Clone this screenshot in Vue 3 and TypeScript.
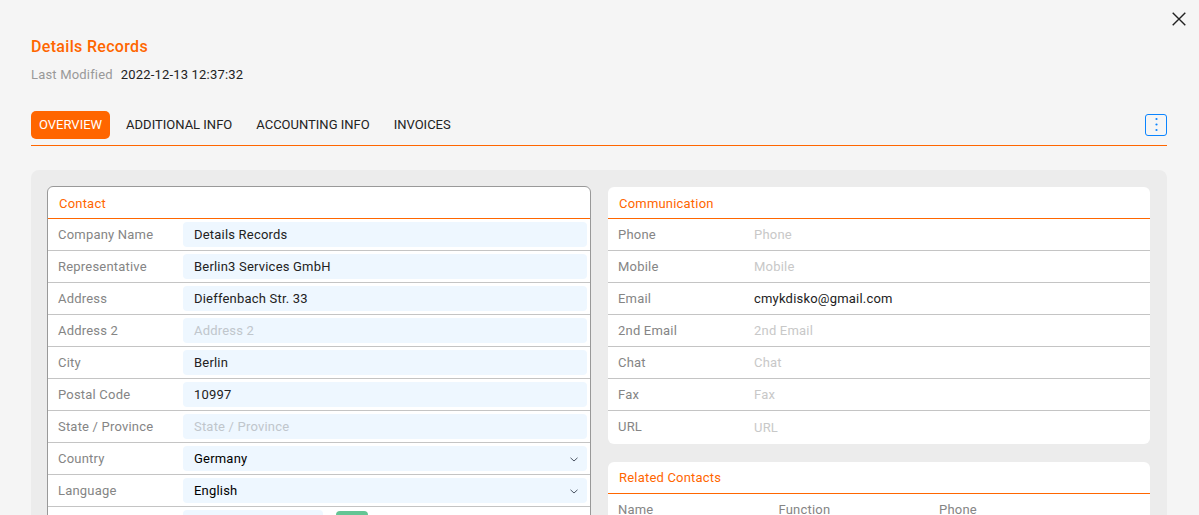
<script setup lang="ts">
interface Field {
  label: string
  value?: string
  select?: boolean
}

const tabs: string[] = ['OVERVIEW', 'ADDITIONAL INFO', 'ACCOUNTING INFO', 'INVOICES']

const contact: Field[] = [
  { label: 'Company Name', value: 'Details Records' },
  { label: 'Representative', value: 'Berlin3 Services GmbH' },
  { label: 'Address', value: 'Dieffenbach Str. 33' },
  { label: 'Address 2' },
  { label: 'City', value: 'Berlin' },
  { label: 'Postal Code', value: '10997' },
  { label: 'State / Province' },
  { label: 'Country', value: 'Germany', select: true },
  { label: 'Language', value: 'English', select: true },
]

const communication: Field[] = [
  { label: 'Phone' },
  { label: 'Mobile' },
  { label: 'Email', value: 'cmykdisko@gmail.com' },
  { label: '2nd Email' },
  { label: 'Chat' },
  { label: 'Fax' },
  { label: 'URL' },
]

const columns: string[] = ['Name', 'Function', 'Phone']
</script>

<template>
  <main class="page">
    <button class="close" aria-label="Close">
      <svg width="14" height="14" viewBox="0 0 14 14">
        <path d="M0.7 0.7L13.3 13.3M13.3 0.7L0.7 13.3" fill="none" stroke="#222" stroke-width="1.4" />
      </svg>
    </button>
    <h1 class="title">Details Records</h1>
    <p class="modified"><span class="muted">Last Modified</span><span>2022-12-13 12:37:32</span></p>

    <nav class="tabs">
      <a v-for="(tab, i) in tabs" :key="tab" class="tab" :class="{ active: i === 0 }">{{ tab }}</a>
      <button class="more" aria-label="More">
        <svg width="20" height="20" viewBox="0 0 20 20" fill="#0a84ff">
          <circle cx="10.5" cy="4" r="1.1" />
          <circle cx="10.5" cy="9.5" r="1.1" />
          <circle cx="10.5" cy="15" r="1.1" />
        </svg>
      </button>
    </nav>

    <div class="board">
      <section class="card contact">
        <h2 class="head">Contact</h2>
        <div v-for="f in contact" :key="f.label" class="row">
          <span class="label">{{ f.label }}</span>
          <div class="field" :class="{ empty: !f.value, select: f.select }">
            <span>{{ f.value ?? f.label }}</span>
            <svg v-if="f.select" class="chevron" width="8" height="5" viewBox="0 0 8 5">
              <path d="M0.5 0.8L4 4L7.5 0.8" fill="none" stroke="#4b5563" stroke-width="1" />
            </svg>
          </div>
        </div>
        <div class="row">
          <span class="label"></span>
          <div class="field short"></div>
          <div class="badge"></div>
        </div>
      </section>

      <div class="side">
        <section class="card communication">
          <h2 class="head">Communication</h2>
          <div v-for="f in communication" :key="f.label" class="row">
            <span class="label">{{ f.label }}</span>
            <span class="plain" :class="{ empty: !f.value }">{{ f.value ?? f.label }}</span>
          </div>
        </section>
        <section class="card related">
          <h2 class="head">Related Contacts</h2>
          <div class="row">
            <span v-for="c in columns" :key="c" class="column">{{ c }}</span>
          </div>
        </section>
      </div>
    </div>
  </main>
</template>

<style>
body {
  background: #f5f5f5;
  overflow: hidden;
}
</style>

<style scoped>
* {
  box-sizing: border-box;
}
.page {
  height: 515px;
  overflow: hidden;
  padding: 37px 32px 0 31px;
  position: relative;
  background: #f5f5f5;
  color: #222;
  font: 13px/20px Roboto, sans-serif;
  letter-spacing: 0.2px;
}
button {
  padding: 0;
  background: none;
  border: 0;
}
.close {
  position: absolute;
  top: 12px;
  right: 13px;
  width: 14px;
  height: 14px;
}
.close svg,
.more svg {
  display: block;
}
.title {
  margin: 0;
  font-size: 16px;
  line-height: 20px;
  font-weight: 500;
  letter-spacing: 0.32px;
  color: #ff6600;
}
.modified {
  display: flex;
  gap: 8px;
  margin: 8px 0 0;
  letter-spacing: 0.18px;
}
.muted {
  color: #999;
}
.tabs {
  display: flex;
  gap: 8px;
  height: 35px;
  margin-top: 26px;
  border-bottom: 1px solid #ff6600;
}
.tab {
  height: 28px;
  padding: 0 8px;
  border-radius: 5px;
  line-height: 28px;
  letter-spacing: 0;
}
.tab.active {
  background: #ff6600;
  color: #fff;
}
.more {
  width: 22px;
  height: 22px;
  margin: 3px 0 0 auto;
  border: 1px solid #0a84ff;
  border-radius: 3px;
}
.board {
  display: flex;
  gap: 17px;
  height: 400px;
  margin-top: 24px;
  padding: 16px 17px 0 16px;
  border-radius: 8px;
  background: #ececec;
}
.card {
  overflow: hidden;
  border-radius: 6px;
  background: #fff;
}
.contact {
  width: 544px;
  height: 400px;
  border: 1px solid #999;
}
.side {
  width: 542px;
  padding-top: 1px;
}
.head {
  height: 32px;
  margin: 0;
  padding-left: 11px;
  border-bottom: 1px solid #ff6600;
  font-size: 13px;
  font-weight: 400;
  line-height: 33px;
  color: #ff6600;
}
.related .head {
  line-height: 31px;
}
.row {
  display: flex;
  height: 32px;
  padding: 3px 3px 0 10px;
  border-bottom: 1px solid #c4c4c4;
  line-height: 25px;
}
.label {
  width: 125px;
  color: #858585;
}
.field {
  display: flex;
  flex: 1;
  justify-content: space-between;
  align-items: center;
  height: 25px;
  padding: 0 9px 0 11px;
  border-radius: 4px;
  background: #eef7ff;
}
.field.select {
  color: #000;
}
.chevron {
  margin-top: 1px;
}
.field.short {
  flex: 0 0 140px;
}
.badge {
  width: 32px;
  height: 25px;
  margin: 1px 0 0 13px;
  border-radius: 4px;
  background: #63c594;
}
.communication {
  height: 257px;
}
.communication .row:last-child {
  border-bottom: 0;
}
.communication .row:last-child .plain {
  padding-top: 1px;
}
.communication .label {
  width: 136px;
}
.related {
  height: 200px;
  margin-top: 18px;
}
.column {
  width: 160.5px;
  color: #858585;
}
.field.empty {
  color: #c0c6cc;
}
.plain.empty {
  color: #c8c8c8;
}
</style>
